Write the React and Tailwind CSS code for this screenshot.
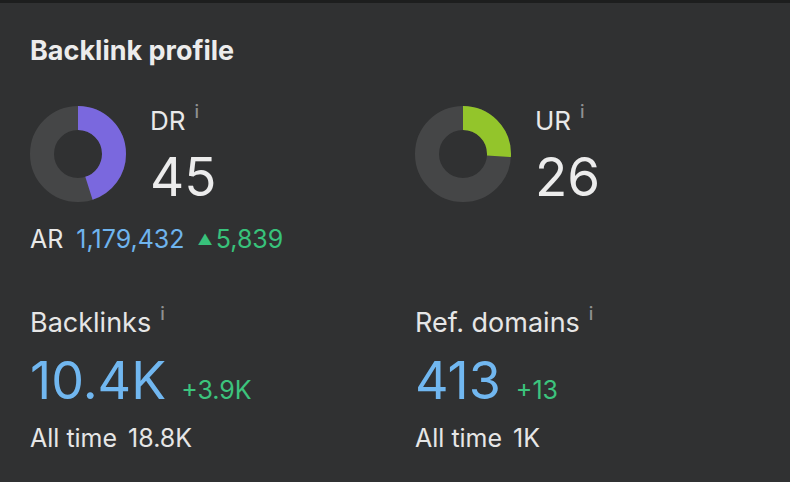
const Donut = ({ value, color }) => {
  const r = 36;
  const c = 2 * Math.PI * r;
  return (
    <svg width="96" height="96" viewBox="0 0 96 96" className="shrink-0">
      <circle cx="48" cy="48" r={r} fill="none" stroke="#454647" strokeWidth="24" />
      <circle
        cx="48"
        cy="48"
        r={r}
        fill="none"
        stroke={color}
        strokeWidth="24"
        strokeDasharray={`${(c * value) / 100} ${c}`}
        transform="rotate(-90 48 48)"
      />
    </svg>
  );
};

const Info = () => (
  <span className="relative -top-[12px] ml-[9px] text-[18px] leading-none font-medium text-[#8f9091]">i</span>
);

const Rating = ({ label, value, color }) => (
  <div className="flex items-start gap-[24px]">
    <Donut value={value} color={color} />
    <div className="flex flex-col">
      <div className="text-[26px] leading-[30px] text-[#e9e9e9]">
        {label}
        <Info />
      </div>
      <div className="text-[53px] leading-[56px] text-[#ececec] mt-[13px]">{value}</div>
    </div>
  </div>
);

const Metric = ({ label, value, delta, total }) => (
  <div className="flex flex-col">
    <div className="text-[27px] leading-[30px] text-[#e6e6e6]">
      {label}
      <Info />
    </div>
    <div className="flex items-baseline mt-[15px]">
      <span className="text-[52px] leading-[56px] text-[#71b7f0]">{value}</span>
      <span className="text-[25px] text-[#3cc47d] ml-[15px]">{delta}</span>
    </div>
    <div className="text-[25px] leading-[30px] text-[#e6e6e6] mt-[13px]">
      All time<span className="ml-[11px]">{total}</span>
    </div>
  </div>
);

export default function App() {
  return (
    <div
      className="w-[790px] h-[482px] bg-[#303132] border-t-[3px] border-[#1d1e1e] px-[30px] pt-[32px] overflow-hidden"
      style={{ fontFamily: "Inter, 'Noto Sans', sans-serif" }}
    >
      <h2 className="text-[27px] leading-[32px] font-bold text-[#ececec]">Backlink profile</h2>

      <div className="grid grid-cols-[385px_1fr] mt-[39px]">
        <div className="flex flex-col">
          <Rating label="DR" value={45} color="#7a68de" />
          <div className="flex items-baseline text-[25px] leading-[30px] mt-[19px]">
            <span className="text-[#e8e8e8]">AR</span>
            <span className="text-[#6fb4ee] ml-[13px]">1,179,432</span>
            <span className="text-[#38c27b] ml-[13px] flex items-baseline">
              <span className="text-[15px] mr-[3px] relative -top-[3px]">▲</span>5,839
            </span>
          </div>
        </div>
        <div>
          <Rating label="UR" value={26} color="#93c52b" />
        </div>
      </div>

      <div className="grid grid-cols-[385px_1fr] mt-[50px]">
        <Metric label="Backlinks" value="10.4K" delta="+3.9K" total="18.8K" />
        <Metric label="Ref. domains" value="413" delta="+13" total="1K" />
      </div>
    </div>
  );
}
